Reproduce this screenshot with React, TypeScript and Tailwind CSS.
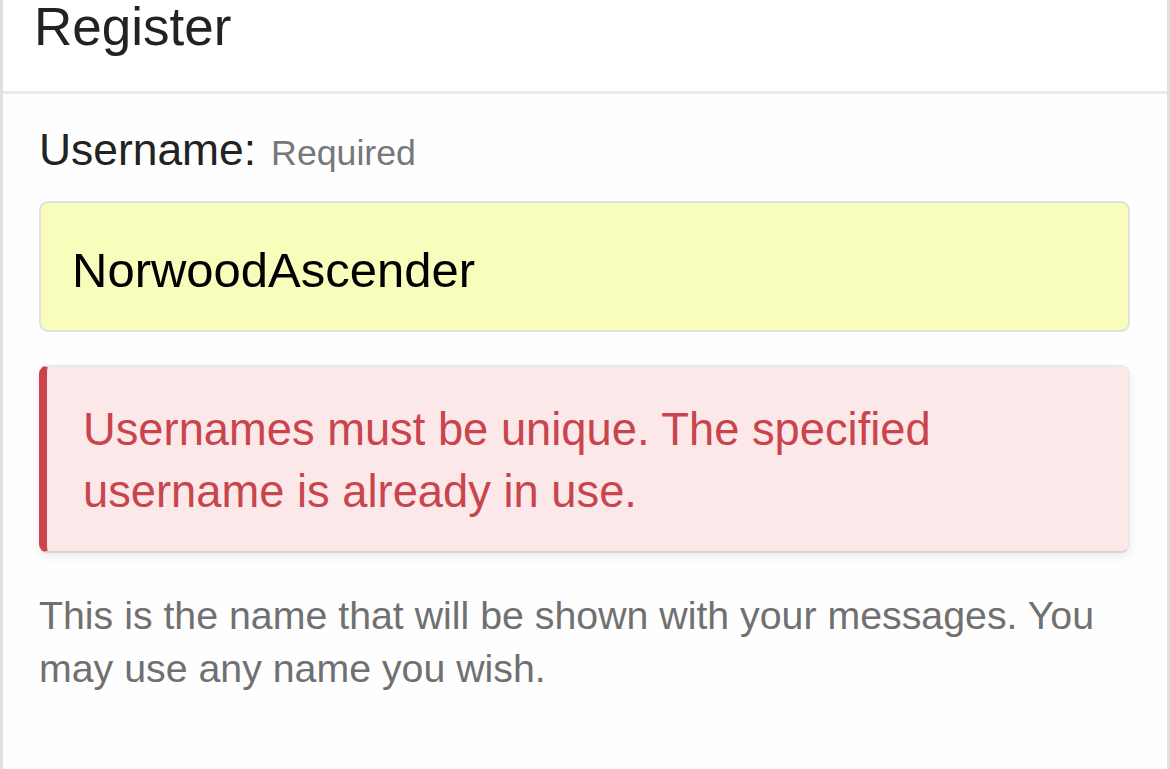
import React from 'react';

const font = { fontFamily: '"Liberation Sans", Arial, Helvetica, sans-serif' };

const App = () => {
  return (
    <div className="min-h-[769px] bg-white" style={font}>
      <div className="min-h-[769px] border-x-[3px] border-[#e0e0e0] bg-[#fefefe]">
        {/* header */}
        <div className="h-[94px] border-b-[3px] border-[#ebebeb] bg-white pl-[31px] pt-[1px]">
          <h1 className="text-[53px] leading-[52px] text-[#222]">Register</h1>
        </div>

        {/* form body */}
        <div className="pl-[36px] pr-[37px] pt-[34px]">
          <label className="flex items-baseline gap-[15px]" htmlFor="username">
            <span className="text-[44.4px] leading-[44px] text-[#222]">Username:</span>
            <span className="text-[35.7px] leading-[35px] text-[#777]">Required</span>
          </label>

          <div className="mt-[29px] flex h-[131px] items-center rounded-[9px] border-2 border-[#e0e0e0] bg-[#f8fdbc] pl-[31px] pt-[7px]">
            <input
              id="username"
              type="text"
              readOnly
              value="NorwoodAscender"
              className="w-full bg-transparent text-[49px] leading-[56px] text-black outline-none"
            />
          </div>

          <div className="mt-[33px] rounded-[9px] border-2 border-l-[8px] border-[#e9e9e9] border-b-[#d6d6d6] border-l-[#c9444b] bg-[#fce8e9] pb-[28px] pl-[36px] pr-[34px] pt-[32px] shadow-[0_4px_10px_rgba(0,0,0,0.08)]">
            <p className="text-[45.3px] leading-[62px] text-[#c9454d]">
              Usernames must be unique. The specified username is already in use.
            </p>
          </div>

          <p className="mt-[36px] text-[39.3px] leading-[53px] text-[#707070]">
            This is the name that will be shown with your messages. You may use any name you wish.
          </p>
        </div>
      </div>
    </div>
  );
};

export default App;
